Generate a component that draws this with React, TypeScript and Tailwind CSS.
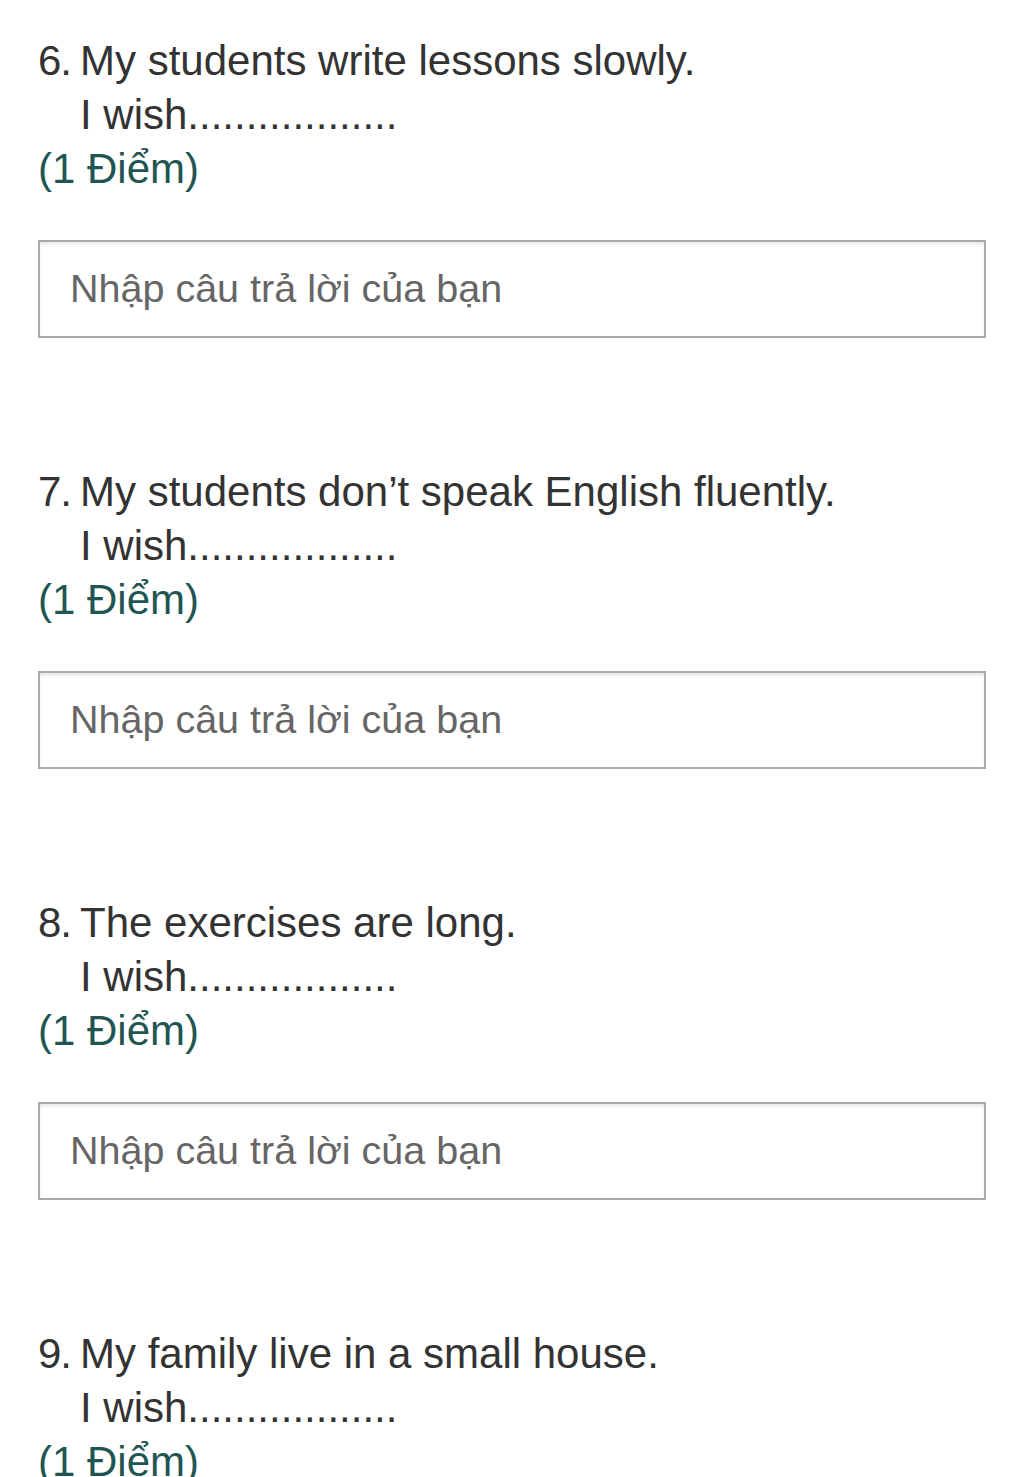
const questions = [
  { num: "6.", text: "My students write lessons slowly." },
  { num: "7.", text: "My students don’t speak English fluently." },
  { num: "8.", text: "The exercises are long." },
  { num: "9.", text: "My family live in a small house." },
];

function Question({ num, text, last }: { num: string; text: string; last: boolean }) {
  return (
    <div className="mb-[42px]">
      <div className="flex text-[42px] leading-[54px] text-[#333333]">
        <span className="w-[42px] shrink-0 tracking-[-1px]">{num}</span>
        <div>
          <div>{text}</div>
          <div>I wish..................</div>
        </div>
      </div>
      <div className="text-[42px] leading-[54px] text-[#1f5552]">(1 Điểm)</div>
      {!last && (
        <div className="mt-[44px] mb-[127px] flex h-[98px] items-center border-2 border-[#aaaaaa] px-[30px] shadow-[inset_0_3px_3px_rgba(0,0,0,0.08)]">
          <span className="text-[39.5px] text-[#666666]">Nhập câu trả lời của bạn</span>
        </div>
      )}
    </div>
  );
}

export default function App() {
  return (
    <div
      className="h-[1477px] overflow-hidden bg-white pl-[38px] pr-[38px] pt-[34px]"
      style={{ fontFamily: '"Liberation Sans", Arial, sans-serif' }}
    >
      {questions.map((q, i) => (
        <Question key={q.num} num={q.num} text={q.text} last={i === questions.length - 1} />
      ))}
    </div>
  );
}
